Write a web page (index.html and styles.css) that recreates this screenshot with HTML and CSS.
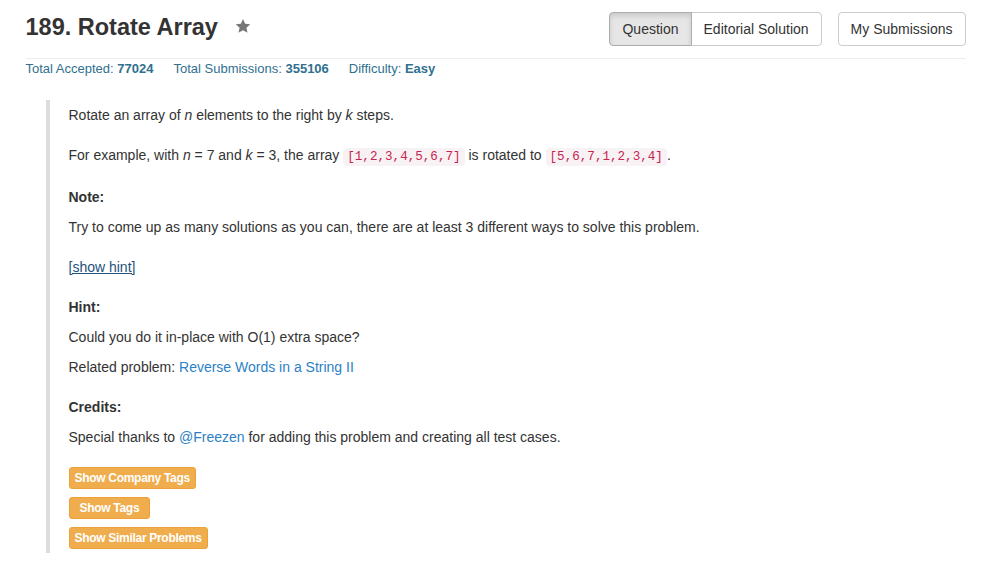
FILE: index.html
```html
<!DOCTYPE html>
<html>
<head>
<meta charset="utf-8">
<link rel="stylesheet" href="styles.css">
</head>
<body>
<div class="container">
  <div class="header">
    <div class="title-wrap">
      <h3 class="title">189. Rotate Array</h3>
      <svg class="star" width="16" height="16" viewBox="0 0 24 24"><path d="M12 1.5l3.2 7.1 7.7.8-5.8 5.2 1.7 7.6L12 18.3l-6.8 3.9 1.7-7.6-5.8-5.2 7.7-.8z" fill="#777"/></svg>
    </div>
    <div class="actions">
      <div class="btn-group">
        <span class="btn active">Question</span><span class="btn">Editorial Solution</span>
      </div>
      <span class="btn single">My Submissions</span>
    </div>
  </div>
  <div class="stats">
    <span class="stat">Total Accepted: <b>77024</b></span>
    <span class="stat">Total Submissions: <b>355106</b></span>
    <span class="stat">Difficulty: <b>Easy</b></span>
  </div>
  <div class="question">
    <p class="p">Rotate an array of <i>n</i> elements to the right by <i>k</i> steps.</p>
    <p class="p">For example, with <i>n</i> = 7 and <i>k</i> = 3, the array <code>[1,2,3,4,5,6,7]</code> is rotated to <code>[5,6,7,1,2,3,4]</code>.</p>
    <p class="p tight"><b>Note:</b></p>
    <p class="p">Try to come up as many solutions as you can, there are at least 3 different ways to solve this problem.</p>
    <p class="p"><a class="hint-link" href="#">[show hint]</a></p>
    <p class="p tight"><b>Hint:</b></p>
    <p class="p tight">Could you do it in-place with O(1) extra space?</p>
    <p class="p">Related problem: <a class="link" href="#">Reverse Words in a String II</a></p>
    <p class="p tight"><b>Credits:</b></p>
    <p class="p">Special thanks to <a class="link" href="#">@Freezen</a> for adding this problem and creating all test cases.</p>
    <div class="tags">
      <span class="label">Show Company Tags</span>
      <span class="label wide">Show Tags</span>
      <span class="label">Show Similar Problems</span>
    </div>
  </div>
</div>
</body>
</html>
```

FILE: styles.css
```css
* { box-sizing: border-box; }
body {
  margin: 0;
  font-family: "Liberation Sans", Arial, sans-serif;
  font-size: 14px;
  line-height: 20px;
  color: #333;
  background: #fff;
}
.container {
  width: 940px;
  margin: 0 auto;
}
.header {
  display: flex;
  justify-content: space-between;
  align-items: flex-start;
  padding: 12px 0 12px;
  border-bottom: 1px solid #eee;
}
.title-wrap {
  display: flex;
  align-items: center;
}
.title {
  margin: 0;
  font-size: 23.5px;
  line-height: 30px;
  font-weight: bold;
  color: #333;
}
.star {
  margin-left: 17px;
  margin-top: -2px;
}
.actions {
  display: flex;
  gap: 16px;
}
.btn-group {
  display: flex;
}
.btn {
  display: inline-block;
  padding: 6px 12px;
  font-size: 14px;
  line-height: 20px;
  color: #333;
  background: #fff;
  border: 1px solid #ccc;
  border-radius: 4px;
  white-space: nowrap;
}
.btn-group .btn:first-child {
  border-top-right-radius: 0;
  border-bottom-right-radius: 0;
}
.btn-group .btn:last-child {
  border-top-left-radius: 0;
  border-bottom-left-radius: 0;
  margin-left: -1px;
}
.btn.active {
  background: #e6e6e6;
  border-color: #adadad;
  box-shadow: inset 0 3px 5px rgba(0,0,0,.125);
  position: relative;
  z-index: 1;
}
.stats {
  margin-top: 1px;
  font-size: 13px;
  line-height: 17px;
  color: #31708f;
  display: flex;
  gap: 20px;
}
.question {
  margin: 23px 0 0 20px;
  border-left: 4px solid #ddd;
  padding: 5px 20px 4px 19px;
}
.p {
  margin: 0 0 20px;
}
.p.tight {
  margin-bottom: 10px;
}
code {
  font-family: "Liberation Mono", Menlo, monospace;
  font-size: 12.6px;
  padding: 2px 4px;
  color: #c7254e;
  background: #f9f2f4;
  border-radius: 4px;
}
.hint-link {
  color: #23527c;
  text-decoration: underline;
}
.link {
  color: #2d7fc6;
  text-decoration: none;
}
.tags {
  display: flex;
  flex-direction: column;
  align-items: flex-start;
  gap: 8px;
}
.label {
  display: inline-block;
  padding: 4px 5px;
  font-size: 12px;
  line-height: 12px;
  font-weight: bold;
  color: #fff;
  background: #f0ad4e;
  border: 1px solid #eea236;
  border-radius: 3px;
  letter-spacing: -0.3px;
}
.label.wide {
  padding: 4px 10px;
}
```
